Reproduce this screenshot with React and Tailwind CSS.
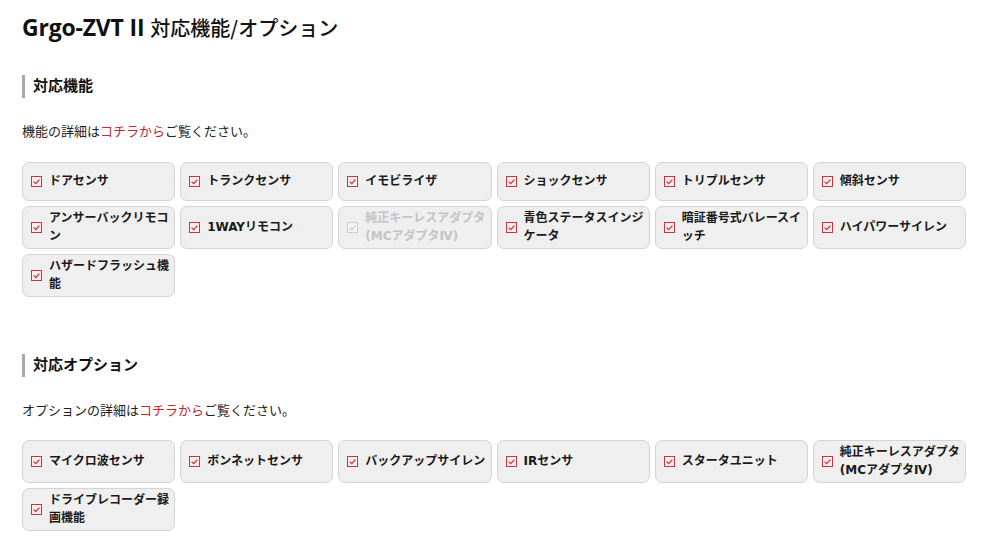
import React from "react";

const features = [
  { t: "ドアセンサ" },
  { t: "トランクセンサ" },
  { t: "イモビライザ" },
  { t: "ショックセンサ" },
  { t: "トリプルセンサ" },
  { t: "傾斜センサ" },
  { t: "アンサーバックリモコン" },
  { t: "1WAYリモコン" },
  { t: "純正キーレスアダプタ(MCアダプタⅣ)", off: true },
  { t: "青色ステータスインジケータ" },
  { t: "暗証番号式バレースイッチ" },
  { t: "ハイパワーサイレン" },
  { t: "ハザードフラッシュ機能" },
];

const options = [
  { t: "マイクロ波センサ" },
  { t: "ボンネットセンサ" },
  { t: "バックアップサイレン" },
  { t: "IRセンサ" },
  { t: "スタータユニット" },
  { t: "純正キーレスアダプタ(MCアダプタⅣ)" },
  { t: "ドライブレコーダー録画機能" },
];

function Check({ off }) {
  const c = off ? "#cfcfcf" : "#cc3340";
  const f = off ? "#f3f3f3" : "#fdeeee";
  return (
    <svg width="11" height="11" viewBox="0 0 11 11" className="shrink-0">
      <rect x="0.5" y="0.5" width="10" height="10" fill={f} stroke={c} strokeWidth="1" />
      <path d="M2.6 5.6 L4.7 7.6 L8.4 3.6" fill="none" stroke={c} strokeWidth="1.3" />
    </svg>
  );
}

function Card({ t, off }) {
  return (
    <div className="flex items-center gap-[7px] min-h-[39px] rounded-[7px] border border-[#d4d4d4] bg-[#efefef] pl-[8px] pr-[4px] py-[3px]">
      <Check off={off} />
      <span
        className={
          "text-[12px] font-bold leading-[17.5px] break-all " +
          (off ? "text-[#c4c4c4]" : "text-[#1a1a1a]")
        }
      >
        {t}
      </span>
    </div>
  );
}

function Heading({ children, className }) {
  return (
    <h2
      className={
        "border-l-[3px] border-[#a8a8a8] pl-[8px] text-[15px] font-bold leading-[23px] text-[#111] " +
        (className || "")
      }
    >
      {children}
    </h2>
  );
}

export default function App() {
  return (
    <div
      className="w-[994px] min-h-[552px] bg-white pl-[22px] pr-[28px] pt-[11px] text-[#222]"
      style={{ fontFamily: '"DejaVu Sans", "Noto Sans CJK JP", sans-serif' }}
    >
      <h1 className="flex items-baseline leading-[32px] text-[#111]">
        <span
          className="text-[23px] font-bold tracking-[-0.2px]"
          style={{ fontFamily: '"Open Sans", "Noto Sans CJK JP", sans-serif' }}
        >
          Grgo-ZVT II
        </span>
        <span
          className="ml-[6px] text-[20px] font-medium"
          style={{ fontFamily: '"Noto Sans CJK JP", sans-serif' }}
        >
          対応機能/オプション
        </span>
      </h1>

      <Heading className="mt-[31px]">対応機能</Heading>
      <p className="mt-[24px] text-[13px] leading-[20px]">
        機能の詳細は<span className="text-[#c1272d]">コチラから</span>ご覧ください。
      </p>
      <div className="mt-[20px] grid grid-cols-6 gap-[5px]">
        {features.map((f, i) => (
          <Card key={i} {...f} />
        ))}
      </div>

      <Heading className="mt-[57px]">対応オプション</Heading>
      <p className="mt-[24px] text-[13px] leading-[20px]">
        オプションの詳細は<span className="text-[#c1272d]">コチラから</span>ご覧ください。
      </p>
      <div className="mt-[19px] grid grid-cols-6 gap-[5px]">
        {options.map((f, i) => (
          <Card key={i} {...f} />
        ))}
      </div>
    </div>
  );
}
